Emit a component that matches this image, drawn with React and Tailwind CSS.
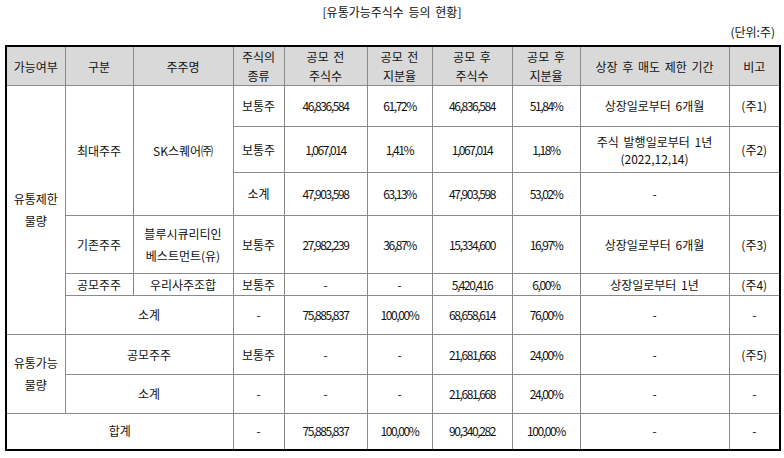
import React from "react"

const font = { fontFamily: '"Noto Sans CJK KR", "Noto Sans", sans-serif' }

const cols = [59, 68, 100, 51, 83, 65, 80, 68, 149, 51]

const C = ({ children, className = "", ...rest }) => (
  <td
    className={`border border-[#8a8a8a] p-0 text-center align-middle ${className}`}
    {...rest}
  >
    {children}
  </td>
)

const N = ({ children, ...rest }) => (
  <C className="tracking-[-1.4px]" {...rest}>
    {children}
  </C>
)

const H = ({ children, ...rest }) => (
  <C className="bg-[#d9d9d9] leading-[19px]" {...rest}>
    {children}
  </C>
)

const App = () => {
  return (
    <div
      className="w-[784px] h-[458px] bg-white text-[12px] text-[#111] tracking-[0px] [word-spacing:2px]"
      style={font}
    >
      <div className="h-[24px] pt-[3px] text-center leading-[18px]">
        [유통가능주식수 등의 현황]
      </div>
      <div className="h-[21px] pr-[9px] text-right leading-[16px]">(단위:주)</div>
      <div className="pl-[5px]">
        <table className="w-[775px] table-fixed border-collapse border-2 border-black">
          <colgroup>
            {cols.map((w, i) => (
              <col key={i} style={{ width: w }} />
            ))}
          </colgroup>
          <tbody>
            <tr className="h-[38px]">
              <H>가능여부</H>
              <H>구분</H>
              <H>주주명</H>
              <H>
                주식의
                <br />
                종류
              </H>
              <H>
                공모 전
                <br />
                주식수
              </H>
              <H>
                공모 전
                <br />
                지분율
              </H>
              <H>
                공모 후
                <br />
                주식수
              </H>
              <H>
                공모 후
                <br />
                지분율
              </H>
              <H>상장 후 매도 제한 기간</H>
              <H>비고</H>
            </tr>
            <tr className="h-[41px]">
              <C rowSpan={6} className="leading-[22px]">
                유통제한
                <br />
                물량
              </C>
              <C rowSpan={3}>최대주주</C>
              <C rowSpan={3}>SK스퀘어㈜</C>
              <C>보통주</C>
              <N>46,836,584</N>
              <N>61,72%</N>
              <N>46,836,584</N>
              <N>51,84%</N>
              <C>상장일로부터 6개월</C>
              <C>(주1)</C>
            </tr>
            <tr className="h-[46px]">
              <C>보통주</C>
              <N>1,067,014</N>
              <N>1,41%</N>
              <N>1,067,014</N>
              <N>1,18%</N>
              <C className="leading-[17px]">
                주식 발행일로부터 1년
                <br />
                (2022,12,14)
              </C>
              <C>(주2)</C>
            </tr>
            <tr className="h-[43px]">
              <C>소계</C>
              <N>47,903,598</N>
              <N>63,13%</N>
              <N>47,903,598</N>
              <N>53,02%</N>
              <C>-</C>
              <C></C>
            </tr>
            <tr className="h-[58px]">
              <C>기존주주</C>
              <C className="leading-[22px]">
                블루시큐리티인
                <br />
                베스트먼트(유)
              </C>
              <C>보통주</C>
              <N>27,982,239</N>
              <N>36,87%</N>
              <N>15,334,600</N>
              <N>16,97%</N>
              <C>상장일로부터 6개월</C>
              <C>(주3)</C>
            </tr>
            <tr className="h-[22px]">
              <C>공모주주</C>
              <C>우리사주조합</C>
              <C>보통주</C>
              <C>-</C>
              <C>-</C>
              <N>5,420,416</N>
              <N>6,00%</N>
              <C>상장일로부터 1년</C>
              <C>(주4)</C>
            </tr>
            <tr className="h-[39px]">
              <C colSpan={2}>소계</C>
              <C>-</C>
              <N>75,885,837</N>
              <N>100,00%</N>
              <N>68,658,614</N>
              <N>76,00%</N>
              <C>-</C>
              <C>-</C>
            </tr>
            <tr className="h-[40px]">
              <C rowSpan={2} className="leading-[22px]">
                유통가능
                <br />
                물량
              </C>
              <C colSpan={2}>공모주주</C>
              <C>보통주</C>
              <C>-</C>
              <C>-</C>
              <N>21,681,668</N>
              <N>24,00%</N>
              <C>-</C>
              <C>(주5)</C>
            </tr>
            <tr className="h-[39px]">
              <C colSpan={2}>소계</C>
              <C>-</C>
              <C>-</C>
              <C>-</C>
              <N>21,681,668</N>
              <N>24,00%</N>
              <C>-</C>
              <C>-</C>
            </tr>
            <tr className="h-[36px]">
              <C colSpan={3}>합계</C>
              <C>-</C>
              <N>75,885,837</N>
              <N>100,00%</N>
              <N>90,340,282</N>
              <N>100,00%</N>
              <C>-</C>
              <C>-</C>
            </tr>
          </tbody>
        </table>
      </div>
    </div>
  )
}

export default App
